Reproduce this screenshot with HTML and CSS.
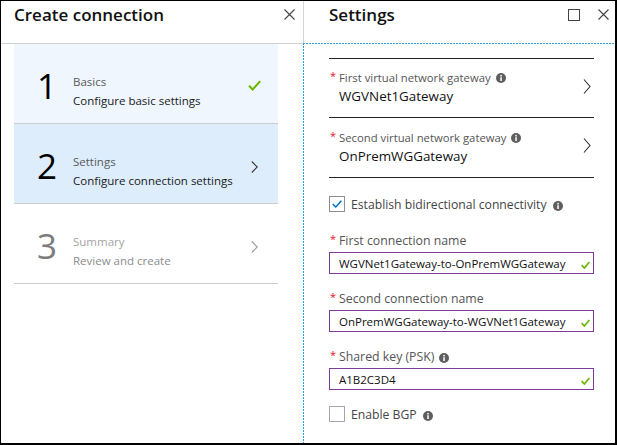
FILE: index.html
```html
<!DOCTYPE html>
<html lang="en">
<head>
<meta charset="utf-8">
<title>Create connection</title>
<link rel="stylesheet" href="styles.css">
</head>
<body>
<div class="frame">
  <section class="blade blade-left">
    <header class="blade-head">
      <h1 class="blade-title">Create connection</h1>
      <svg class="head-icon" width="11" height="11" viewBox="0 0 11 11"><path d="M0.5 0.5L10.5 10.5M10.5 0.5L0.5 10.5" stroke="#444" stroke-width="1.1" fill="none"/></svg>
    </header>
    <div class="steps">
      <div class="step step-done">
        <div class="step-num">1</div>
        <div class="step-text">
          <div class="step-title">Basics</div>
          <div class="step-desc">Configure basic settings</div>
        </div>
        <svg class="step-check" width="13" height="11" viewBox="0 0 13 11"><path d="M1 5.8L4.7 9.5L12.2 1.2" stroke="#6bb700" stroke-width="2" fill="none"/></svg>
      </div>
      <div class="step step-active">
        <div class="step-num">2</div>
        <div class="step-text">
          <div class="step-title">Settings</div>
          <div class="step-desc">Configure connection settings</div>
        </div>
        <svg class="step-chevron" width="7" height="12" viewBox="0 0 7 12"><path d="M0.8 0.5L6.3 6L0.8 11.5" stroke="#333" stroke-width="1.1" fill="none"/></svg>
      </div>
      <div class="step step-todo">
        <div class="step-num">3</div>
        <div class="step-text">
          <div class="step-title">Summary</div>
          <div class="step-desc">Review and create</div>
        </div>
        <svg class="step-chevron" width="7" height="12" viewBox="0 0 7 12"><path d="M0.8 0.5L6.3 6L0.8 11.5" stroke="#999" stroke-width="1.1" fill="none"/></svg>
      </div>
    </div>
  </section>

  <section class="blade blade-right">
    <header class="blade-head blade-head-right">
      <h1 class="blade-title">Settings</h1>
      <svg class="head-icon head-max" width="12" height="12" viewBox="0 0 12 12"><rect x="0.5" y="0.5" width="11" height="11" stroke="#444" fill="none"/></svg>
      <svg class="head-icon" width="11" height="11" viewBox="0 0 11 11"><path d="M0.5 0.5L10.5 10.5M10.5 0.5L0.5 10.5" stroke="#444" stroke-width="1.1" fill="none"/></svg>
    </header>
    <div class="blade-body">
      <div class="pickers">
        <div class="picker">
          <div class="picker-main">
            <div class="picker-label"><span class="req">*</span>First virtual network gateway<svg class="info" width="10" height="10" viewBox="0 0 10 10"><circle cx="5" cy="5" r="5" fill="#5e5e5e"/><rect x="4.3" y="4.2" width="1.5" height="3.8" fill="#fff"/><circle cx="5.05" cy="2.7" r="0.85" fill="#fff"/></svg></div>
            <div class="picker-value">WGVNet1Gateway</div>
          </div>
          <svg class="picker-chevron" width="8" height="15" viewBox="0 0 8 15"><path d="M1 0.5L7 7.5L1 14.5" stroke="#333" stroke-width="1.1" fill="none"/></svg>
        </div>
        <div class="picker picker-second">
          <div class="picker-main">
            <div class="picker-label"><span class="req">*</span>Second virtual network gateway<svg class="info" width="10" height="10" viewBox="0 0 10 10"><circle cx="5" cy="5" r="5" fill="#5e5e5e"/><rect x="4.3" y="4.2" width="1.5" height="3.8" fill="#fff"/><circle cx="5.05" cy="2.7" r="0.85" fill="#fff"/></svg></div>
            <div class="picker-value">OnPremWGGateway</div>
          </div>
          <svg class="picker-chevron" width="8" height="15" viewBox="0 0 8 15"><path d="M1 0.5L7 7.5L1 14.5" stroke="#333" stroke-width="1.1" fill="none"/></svg>
        </div>
      </div>

      <div class="checkrow checkrow-first">
        <span class="box"><svg width="10" height="8" viewBox="0 0 10 8"><path d="M0.7 4L3.8 7L9.4 0.8" stroke="#0072c6" stroke-width="1.5" fill="none"/></svg></span>
        <span class="check-label">Establish bidirectional connectivity</span>
        <svg class="info" width="10" height="10" viewBox="0 0 10 10"><circle cx="5" cy="5" r="5" fill="#5e5e5e"/><rect x="4.3" y="4.2" width="1.5" height="3.8" fill="#fff"/><circle cx="5.05" cy="2.7" r="0.85" fill="#fff"/></svg>
      </div>

      <div class="field field-first">
        <div class="field-label"><span class="req">*</span>First connection name</div>
        <div class="input"><span class="input-text">WGVNet1Gateway-to-OnPremWGGateway</span><svg class="input-check" width="9" height="8" viewBox="0 0 9 8"><path d="M0.7 4.2L3.4 7L8.4 1" stroke="#6bb700" stroke-width="1.7" fill="none"/></svg></div>
      </div>
      <div class="field">
        <div class="field-label"><span class="req">*</span>Second connection name</div>
        <div class="input"><span class="input-text">OnPremWGGateway-to-WGVNet1Gateway</span><svg class="input-check" width="9" height="8" viewBox="0 0 9 8"><path d="M0.7 4.2L3.4 7L8.4 1" stroke="#6bb700" stroke-width="1.7" fill="none"/></svg></div>
      </div>
      <div class="field">
        <div class="field-label"><span class="req">*</span>Shared key (PSK)<svg class="info" width="10" height="10" viewBox="0 0 10 10"><circle cx="5" cy="5" r="5" fill="#5e5e5e"/><rect x="4.3" y="4.2" width="1.5" height="3.8" fill="#fff"/><circle cx="5.05" cy="2.7" r="0.85" fill="#fff"/></svg></div>
        <div class="input"><span class="input-text">A1B2C3D4</span><svg class="input-check" width="9" height="8" viewBox="0 0 9 8"><path d="M0.7 4.2L3.4 7L8.4 1" stroke="#6bb700" stroke-width="1.7" fill="none"/></svg></div>
      </div>

      <div class="checkrow checkrow-last">
        <span class="box box-empty"></span>
        <span class="check-label">Enable BGP</span>
        <svg class="info" width="10" height="10" viewBox="0 0 10 10"><circle cx="5" cy="5" r="5" fill="#5e5e5e"/><rect x="4.3" y="4.2" width="1.5" height="3.8" fill="#fff"/><circle cx="5.05" cy="2.7" r="0.85" fill="#fff"/></svg>
      </div>
    </div>
  </section>
</div>
</body>
</html>
```

FILE: styles.css
```css
* { box-sizing: border-box; }
html, body { margin: 0; padding: 0; background: #fff; }
body {
  font-family: "Open Sans", "Noto Sans", "DejaVu Sans", sans-serif;
  color: #222;
}

.frame {
  width: 617px;
  height: 445px;
  border-style: solid;
  border-color: #000;
  border-width: 1px 2px 2px 1px;
  display: flex;
  overflow: hidden;
  background: #fff;
}

.blade { display: flex; flex-direction: column; }
.blade-left { width: 302px; flex: none; }
.blade-right { flex: 1; min-width: 0; }

.blade-head {
  height: 43px;
  flex: none;
  display: flex;
  align-items: flex-start;
  padding: 2px 8px 0 13px;
  border-bottom: 1px solid #cfcfcf;
}
.blade-head-right {
  height: 42px;
  border-bottom: none;
  border-left: 1px solid #d4d4d4;
  padding: 2px 6px 0 25px;
}
.blade-title {
  margin: 0;
  flex: 1;
  font-size: 17px;
  font-weight: 600;
  line-height: 24px;
  color: #111;
}
.head-icon { flex: none; margin-top: 6px; }
.head-max { margin-right: 18px; }

/* steps */
.steps { padding-left: 13px; }
.step {
  width: 264px;
  height: 80px;
  display: flex;
  align-items: flex-start;
  border-bottom: 1px solid #cdcdcd;
}
.step-done { background: #eff6fe; }
.step-active { background: #ddedfc; }
.step-num {
  width: 40px;
  margin-left: 13px;
  padding-top: 22px;
  text-align: center;
  font-size: 35px;
  line-height: 40px;
  color: #000;
}
.step-text {
  flex: 1;
  margin-left: 6px;
  padding-top: 28px;
  font-size: 11.5px;
  line-height: 19px;
}
.step-title { color: #5a5a5a; }
.step-desc { color: #1a1a1a; }
.step-todo .step-num { color: #7c7c7c; }
.step-todo .step-title { color: #a3a3a3; }
.step-todo .step-desc { color: #8c8c8c; }
.step-check { flex: none; margin-top: 36px; margin-right: 17px; }
.step-chevron { flex: none; margin-top: 37px; margin-right: 20px; }

/* right body: fine blue focus dashes on top and left edges */
.blade-body {
  flex: 1;
  border-top: 1px solid transparent;
  border-left: 1px solid transparent;
  background-image:
    repeating-linear-gradient(90deg, #2aa0d8 0 2px, transparent 2px 3px),
    repeating-linear-gradient(180deg, #2aa0d8 0 2px, transparent 2px 3px);
  background-size: 100% 1px, 1px 100%;
  background-position: 0 0, 0 0;
  background-repeat: no-repeat;
  background-origin: border-box;
  background-clip: border-box;
  padding: 14px 21px 0 25px;
}
.pickers { border-bottom: 1px solid #222; }
.picker {
  height: 59px;
  border-top: 1px solid #222;
  display: flex;
  align-items: flex-start;
}
.picker-second { height: 60px; }
.picker-main { flex: 1; padding-top: 11px; }
.picker-second .picker-main { padding-top: 12px; }
.picker-label {
  font-size: 11.3px;
  line-height: 16px;
  color: #555;
  display: flex;
  align-items: center;
}
.picker-value {
  font-size: 13.4px;
  line-height: 20px;
  color: #111;
  padding-left: 10px;
}
.picker-chevron { flex: none; align-self: center; margin-top: -4px; margin-right: 3px; }

.req {
  color: #e81123;
  font-size: 11px;
  line-height: 10px;
  width: 10px;
  flex: none;
  align-self: flex-start;
  margin-top: 1px;
  padding-left: 1px;
}
.info { flex: none; margin-left: 5px; }

.checkrow {
  display: flex;
  align-items: center;
  height: 16px;
}
.checkrow-first { margin-top: 18px; }
.checkrow-last { margin-top: 16px; }
.box {
  width: 16px;
  height: 16px;
  flex: none;
  border: 1px solid #8f8f8f;
  display: flex;
  align-items: center;
  justify-content: center;
  background: #fff;
}
.box-empty { border-color: #a6a6a6; }
.check-label {
  margin-left: 6px;
  font-size: 12.2px;
  line-height: 16px;
  color: #444;
  padding-top: 1px;
}
.checkrow .info { margin-left: 6px; margin-top: 3px; }

.field { margin-top: 17px; }
.field-first { margin-top: 21px; }
.field-label {
  font-size: 12.3px;
  line-height: 16px;
  color: #555;
  margin-bottom: 3px;
  display: flex;
  align-items: center;
}
.field-label .info { margin-left: 5px; margin-top: 1px; }
.input {
  height: 22px;
  border: 1px solid #7d3c98;
  padding: 1px 3px 0 9px;
  display: flex;
  align-items: center;
  justify-content: space-between;
}
.input-text {
  font-size: 11.5px;
  line-height: 19px;
  color: #111;
}
.input-check { flex: none; margin-top: 2px; }
```
